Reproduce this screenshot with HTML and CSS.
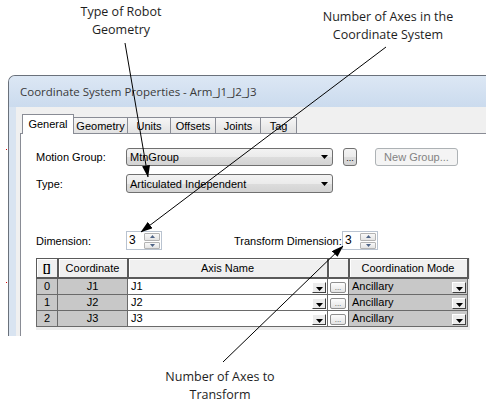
FILE: index.html
```html
<!DOCTYPE html>
<html>
<head>
<meta charset="utf-8">
<link rel="stylesheet" href="styles.css">
</head>
<body>
<div class="window">
  <div class="titlebar">Coordinate System Properties - Arm_J1_J2_J3</div>
  <div class="client">
    <div class="tabs">
      <div class="tab active w-general">General</div>
      <div class="tab w-geometry">Geometry</div>
      <div class="tab w-units">Units</div>
      <div class="tab w-offsets">Offsets</div>
      <div class="tab w-joints">Joints</div>
      <div class="tab w-tag">Tag</div>
    </div>
    <div class="page">
      <div class="row row-group">
        <div class="lbl">Motion Group:</div>
        <div class="combo"><span>MtnGroup</span><svg class="caret" width="7" height="4" viewBox="0 0 7 4"><path d="M0 0H7L3.5 4Z"/></svg></div>
        <div class="dots">...</div>
        <div class="newgroup">New Group...</div>
      </div>
      <div class="row row-type">
        <div class="lbl">Type:</div>
        <div class="combo combo-tall"><span>Articulated Independent</span><svg class="caret" width="7" height="4" viewBox="0 0 7 4"><path d="M0 0H7L3.5 4Z"/></svg></div>
      </div>
      <div class="row row-dim">
        <div class="lbl">Dimension:</div>
        <div class="spin">
          <div class="spin-val">3</div>
          <div class="spin-btns">
            <div class="sb"><svg width="5" height="3" viewBox="0 0 5 3"><path d="M0 3H5L2.5 0Z"/></svg></div>
            <div class="sb"><svg width="5" height="3" viewBox="0 0 5 3"><path d="M0 0H5L2.5 3Z"/></svg></div>
          </div>
        </div>
        <div class="lbl2">Transform Dimension:</div>
        <div class="spin">
          <div class="spin-val">3</div>
          <div class="spin-btns">
            <div class="sb"><svg width="5" height="3" viewBox="0 0 5 3"><path d="M0 3H5L2.5 0Z"/></svg></div>
            <div class="sb"><svg width="5" height="3" viewBox="0 0 5 3"><path d="M0 0H5L2.5 3Z"/></svg></div>
          </div>
        </div>
      </div>
      <div class="grid">
        <table>
          <colgroup><col class="c0"><col class="c1"><col class="c2"><col class="c3"><col class="c4"></colgroup>
          <thead>
            <tr><th class="th-idx">[]</th><th>Coordinate</th><th>Axis Name</th><th></th><th>Coordination Mode</th></tr>
          </thead>
          <tbody>
            <tr>
              <td class="gray">0</td><td class="gray">J1</td>
              <td><div class="cell"><span>J1</span><div class="dd"><svg width="7" height="4" viewBox="0 0 7 4"><path d="M0 0H7L3.5 4Z"/></svg></div></div></td>
              <td><div class="cell cell-c"><div class="eb">...</div></div></td>
              <td class="gray-l"><div class="cell"><span>Ancillary</span><div class="dd"><svg width="7" height="4" viewBox="0 0 7 4"><path d="M0 0H7L3.5 4Z"/></svg></div></div></td>
            </tr>
            <tr>
              <td class="gray">1</td><td class="gray">J2</td>
              <td><div class="cell"><span>J2</span><div class="dd"><svg width="7" height="4" viewBox="0 0 7 4"><path d="M0 0H7L3.5 4Z"/></svg></div></div></td>
              <td><div class="cell cell-c"><div class="eb">...</div></div></td>
              <td class="gray-l"><div class="cell"><span>Ancillary</span><div class="dd"><svg width="7" height="4" viewBox="0 0 7 4"><path d="M0 0H7L3.5 4Z"/></svg></div></div></td>
            </tr>
            <tr>
              <td class="gray">2</td><td class="gray">J3</td>
              <td><div class="cell"><span>J3</span><div class="dd"><svg width="7" height="4" viewBox="0 0 7 4"><path d="M0 0H7L3.5 4Z"/></svg></div></div></td>
              <td><div class="cell cell-c"><div class="eb">...</div></div></td>
              <td class="gray-l"><div class="cell"><span>Ancillary</span><div class="dd"><svg width="7" height="4" viewBox="0 0 7 4"><path d="M0 0H7L3.5 4Z"/></svg></div></div></td>
            </tr>
          </tbody>
        </table>
      </div>
    </div>
  </div>
</div>

<div class="note note-geom">Type of Robot<br>Geometry</div>
<div class="note note-axes">Number of Axes in the<br>Coordinate System</div>
<div class="note note-transform">Number of Axes to<br>Transform</div>

<svg class="arrows" width="486" height="405" viewBox="0 0 486 405">
  <defs>
    <marker id="ah" markerWidth="12" markerHeight="8" refX="11.5" refY="4" orient="auto" markerUnits="userSpaceOnUse">
      <path d="M0 0L12 4L0 8Z" fill="#000"/>
    </marker>
  </defs>
  <line x1="125" y1="43" x2="148" y2="177" stroke="#000" stroke-width="1" marker-end="url(#ah)"/>
  <line x1="386" y1="47" x2="141" y2="232" stroke="#000" stroke-width="1" marker-end="url(#ah)"/>
  <line x1="223" y1="362" x2="343" y2="246" stroke="#000" stroke-width="1" marker-end="url(#ah)"/>
  <rect x="6" y="149" width="1" height="1" fill="#e00000"/>
  <rect x="6" y="282" width="1" height="1" fill="#e00000"/>
</svg>
</body>
</html>
```

FILE: styles.css
```css
* { box-sizing: border-box; }
html, body {
  margin: 0;
  padding: 0;
  width: 486px;
  height: 405px;
  overflow: hidden;
  background: #fff;
}
body {
  position: relative;
  font-family: "Liberation Sans", Arial, sans-serif;
  font-size: 11px;
  color: #000;
}

/* window */
.window {
  margin: 75px 0 0 8px;
  width: 500px;
  height: 261px;
  border: 1px solid #6a717b;
  border-right: none;
  border-bottom: none;
  border-radius: 7px 0 0 0;
  background: #d9e4f1;
  display: flex;
  flex-direction: column;
}
.titlebar {
  height: 31px;
  flex: none;
  padding-left: 11px;
  display: flex;
  align-items: center;
  font-family: "Open Sans", sans-serif;
  font-size: 11.5px;
  color: #3a3a3a;
  background: linear-gradient(#dce7f4, #cbdbee);
  border-radius: 6px 0 0 0;
}
.client {
  flex: 1;
  margin-left: 7px;
  background: #f0f0f0;
  padding: 7px 0 0 4px;
  display: flex;
  flex-direction: column;
}

/* tabs */
.tabs {
  display: flex;
  align-items: flex-end;
  height: 19px;
  margin-left: 2px;
  flex: none;
}
.tab {
  height: 16px;
  border: 1px solid #898c95;
  border-bottom: none;
  margin-right: -1px;
  background: linear-gradient(#f6f6f6, #e2e2e2);
  display: flex;
  align-items: center;
  justify-content: center;
  padding-top: 1px;
}
.tab.active {
  height: 20px;
  margin-bottom: -1px;
  background: #fff;
  position: relative;
  z-index: 2;
  padding-top: 0;
  padding-bottom: 1px;
}
.w-general { width: 52px; }
.w-geometry { width: 55px; }
.w-units { width: 44px; }
.w-offsets { width: 46px; }
.w-joints { width: 46px; }
.w-tag { width: 37px; }

/* page */
.page {
  flex: 1;
  border: 1px solid #898c95;
  border-right: none;
  border-bottom: none;
  background: #fff;
  padding: 14px 0 0 15px;
  position: relative;
}
.row {
  display: flex;
  align-items: center;
}
.row-type { margin-top: 8px; }
.row-dim { margin-top: 38px; }
.lbl { width: 90px; }
.combo {
  width: 207px;
  height: 18px;
  border: 1px solid #707070;
  border-radius: 3px;
  background: linear-gradient(#f3f3f3, #ebebeb 50%, #dddddd 50%, #d3d3d3);
  display: flex;
  align-items: center;
  padding-left: 3px;
}
.combo-tall { height: 19px; }
.caret { margin-left: auto; margin-right: 4px; fill: #000; }
.dots {
  margin-left: 10px;
  width: 14px;
  height: 18px;
  border: 1px solid #707070;
  border-radius: 3px;
  background: linear-gradient(#f3f3f3, #ebebeb 50%, #dddddd 50%, #d3d3d3);
  font-size: 9px;
  display: flex;
  align-items: flex-end;
  justify-content: center;
  padding-bottom: 2px;
  line-height: 9px;
}
.newgroup {
  margin-left: 18px;
  width: 83px;
  height: 18px;
  border: 1px solid #adb2b5;
  border-radius: 3px;
  background: #f4f4f4;
  color: #838383;
  display: flex;
  align-items: center;
  justify-content: center;
}

/* spinners */
.spin {
  width: 36px;
  height: 19px;
  border: 1px solid #b9c3d0;
  background: #fff;
  display: flex;
}
.spin-val {
  flex: 1;
  padding-left: 2px;
  font-size: 12px;
  line-height: 17px;
}
.spin-btns {
  width: 17px;
  display: flex;
  flex-direction: column;
  gap: 1px;
  padding: 1px 1px 0 0;
}
.sb {
  flex: 1;
  border: 1px solid #b3b3b3;
  border-radius: 1px;
  background: linear-gradient(#f8f8f8, #e4e4e4);
  display: flex;
  align-items: center;
  justify-content: center;
  fill: #4f6486;
}
.lbl2 {
  margin-left: 72px;
  width: 108px;
}

/* grid */
.grid {
  margin-top: 8px;
  width: 434px;
  background: #ececec;
  padding: 0 3px 3px 0;
}
table {
  border-collapse: collapse;
  table-layout: fixed;
  width: 431px;
}
.c0 { width: 21px; }
.c1 { width: 70px; }
.c2 { width: 200px; }
.c3 { width: 21px; }
.c4 { width: 119px; }
th {
  height: 19px;
  padding: 0;
  font-weight: normal;
  background: #f0f0f0;
  border: 1px solid #5a5a5a;
  border-right-width: 2px;
  border-bottom-width: 2px;
  box-shadow: inset 1px 1px #ffffff;
  text-align: center;
  font-size: 11px;
}
th.th-idx { font-weight: bold; }
td {
  height: 16px;
  padding: 0;
  border: 1px solid #6a6a6a;
  background: #fff;
  font-size: 11px;
}
td.gray {
  background: #c8c8c8;
  text-align: center;
}
td.gray-l { background: #c8c8c8; }
.cell {
  display: flex;
  align-items: center;
  height: 15px;
  padding-left: 3px;
}
.cell-c { justify-content: center; padding-left: 0; }
.dd {
  margin-left: auto;
  margin-right: 1px;
  align-self: flex-end;
  margin-bottom: 1px;
  width: 14px;
  height: 11px;
  background: #ececec;
  border: 1px solid;
  border-color: #ffffff #404040 #404040 #ffffff;
  display: flex;
  align-items: flex-end;
  justify-content: center;
  padding-bottom: 1px;
  fill: #000;
}
.eb {
  width: 16px;
  height: 11px;
  align-self: flex-end;
  margin-bottom: 1px;
  border: 1px solid #8f8f8f;
  border-radius: 2px;
  background: linear-gradient(#fdfdfd, #e4e4e4);
  color: #555;
  font-size: 8px;
  line-height: 8px;
  display: flex;
  align-items: flex-end;
  justify-content: center;
}

/* annotations */
.note {
  position: absolute;
  font-family: "Open Sans", sans-serif;
  font-size: 12.5px;
  line-height: 18px;
  color: #1e1e1e;
  text-align: center;
  z-index: 5;
}
.note-geom { left: 41px; top: 3px; width: 160px; }
.note-axes { left: 298px; top: 8px; width: 180px; }
.note-transform { left: 140px; top: 368px; width: 160px; }
.arrows {
  position: absolute;
  left: 0;
  top: 0;
  z-index: 10;
  pointer-events: none;
}
```
